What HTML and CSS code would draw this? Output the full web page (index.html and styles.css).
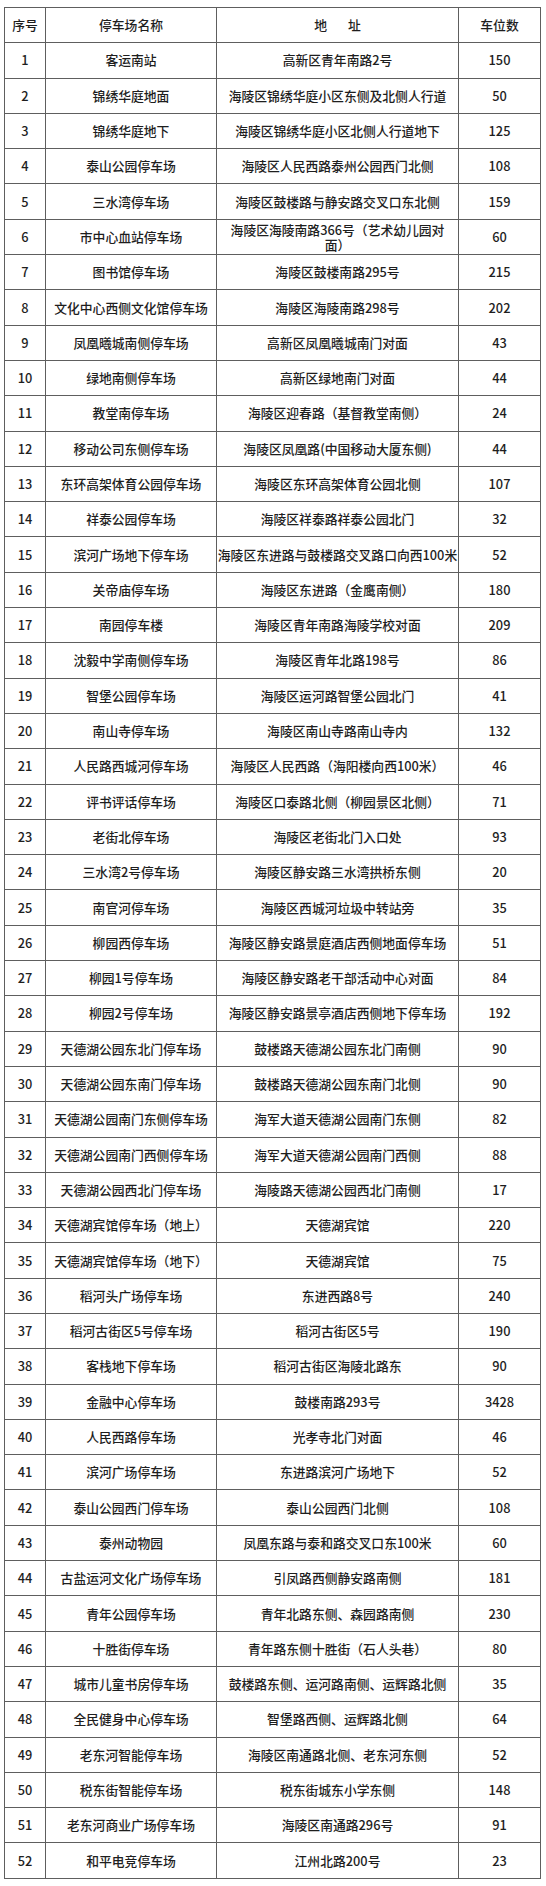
FILE: index.html
```html
<!DOCTYPE html>
<html lang="zh-CN">
<head>
<meta charset="utf-8">
<title>停车场列表</title>
<link rel="stylesheet" href="styles.css">
</head>
<body>
<table class="lots">
<colgroup>
<col class="c-no"><col class="c-name"><col class="c-addr"><col class="c-cnt">
</colgroup>
<thead>
<tr><th>序号</th><th>停车场名称</th><th>地<span class="gap"></span>址</th><th>车位数</th></tr>
</thead>
<tbody>
<tr><td>1</td><td>客运南站</td><td>高新区青年南路2号</td><td>150</td></tr>
<tr><td>2</td><td>锦绣华庭地面</td><td>海陵区锦绣华庭小区东侧及北侧人行道</td><td>50</td></tr>
<tr><td>3</td><td>锦绣华庭地下</td><td>海陵区锦绣华庭小区北侧人行道地下</td><td>125</td></tr>
<tr><td>4</td><td>泰山公园停车场</td><td>海陵区人民西路泰州公园西门北侧</td><td>108</td></tr>
<tr><td>5</td><td>三水湾停车场</td><td>海陵区鼓楼路与静安路交叉口东北侧</td><td>159</td></tr>
<tr><td>6</td><td>市中心血站停车场</td><td class="two">海陵区海陵南路366号（艺术幼儿园对<br>面）</td><td>60</td></tr>
<tr><td>7</td><td>图书馆停车场</td><td>海陵区鼓楼南路295号</td><td>215</td></tr>
<tr><td>8</td><td>文化中心西侧文化馆停车场</td><td>海陵区海陵南路298号</td><td>202</td></tr>
<tr><td>9</td><td>凤凰曦城南侧停车场</td><td>高新区凤凰曦城南门对面</td><td>43</td></tr>
<tr><td>10</td><td>绿地南侧停车场</td><td>高新区绿地南门对面</td><td>44</td></tr>
<tr><td>11</td><td>教堂南停车场</td><td>海陵区迎春路（基督教堂南侧）</td><td>24</td></tr>
<tr><td>12</td><td>移动公司东侧停车场</td><td>海陵区凤凰路(中国移动大厦东侧)</td><td>44</td></tr>
<tr><td>13</td><td>东环高架体育公园停车场</td><td>海陵区东环高架体育公园北侧</td><td>107</td></tr>
<tr><td>14</td><td>祥泰公园停车场</td><td>海陵区祥泰路祥泰公园北门</td><td>32</td></tr>
<tr><td>15</td><td>滨河广场地下停车场</td><td>海陵区东进路与鼓楼路交叉路口向西100米</td><td>52</td></tr>
<tr><td>16</td><td>关帝庙停车场</td><td>海陵区东进路（金鹰南侧）</td><td>180</td></tr>
<tr><td>17</td><td>南园停车楼</td><td>海陵区青年南路海陵学校对面</td><td>209</td></tr>
<tr><td>18</td><td>沈毅中学南侧停车场</td><td>海陵区青年北路198号</td><td>86</td></tr>
<tr><td>19</td><td>智堡公园停车场</td><td>海陵区运河路智堡公园北门</td><td>41</td></tr>
<tr><td>20</td><td>南山寺停车场</td><td>海陵区南山寺路南山寺内</td><td>132</td></tr>
<tr><td>21</td><td>人民路西城河停车场</td><td>海陵区人民西路（海阳楼向西100米）</td><td>46</td></tr>
<tr><td>22</td><td>评书评话停车场</td><td>海陵区口泰路北侧（柳园景区北侧）</td><td>71</td></tr>
<tr><td>23</td><td>老街北停车场</td><td>海陵区老街北门入口处</td><td>93</td></tr>
<tr><td>24</td><td>三水湾2号停车场</td><td>海陵区静安路三水湾拱桥东侧</td><td>20</td></tr>
<tr><td>25</td><td>南官河停车场</td><td>海陵区西城河垃圾中转站旁</td><td>35</td></tr>
<tr><td>26</td><td>柳园西停车场</td><td>海陵区静安路景庭酒店西侧地面停车场</td><td>51</td></tr>
<tr><td>27</td><td>柳园1号停车场</td><td>海陵区静安路老干部活动中心对面</td><td>84</td></tr>
<tr><td>28</td><td>柳园2号停车场</td><td>海陵区静安路景亭酒店西侧地下停车场</td><td>192</td></tr>
<tr><td>29</td><td>天德湖公园东北门停车场</td><td>鼓楼路天德湖公园东北门南侧</td><td>90</td></tr>
<tr><td>30</td><td>天德湖公园东南门停车场</td><td>鼓楼路天德湖公园东南门北侧</td><td>90</td></tr>
<tr><td>31</td><td>天德湖公园南门东侧停车场</td><td>海军大道天德湖公园南门东侧</td><td>82</td></tr>
<tr><td>32</td><td>天德湖公园南门西侧停车场</td><td>海军大道天德湖公园南门西侧</td><td>88</td></tr>
<tr><td>33</td><td>天德湖公园西北门停车场</td><td>海陵路天德湖公园西北门南侧</td><td>17</td></tr>
<tr><td>34</td><td>天德湖宾馆停车场（地上）</td><td>天德湖宾馆</td><td>220</td></tr>
<tr><td>35</td><td>天德湖宾馆停车场（地下）</td><td>天德湖宾馆</td><td>75</td></tr>
<tr><td>36</td><td>稻河头广场停车场</td><td>东进西路8号</td><td>240</td></tr>
<tr><td>37</td><td>稻河古街区5号停车场</td><td>稻河古街区5号</td><td>190</td></tr>
<tr><td>38</td><td>客栈地下停车场</td><td>稻河古街区海陵北路东</td><td>90</td></tr>
<tr><td>39</td><td>金融中心停车场</td><td>鼓楼南路293号</td><td>3428</td></tr>
<tr><td>40</td><td>人民西路停车场</td><td>光孝寺北门对面</td><td>46</td></tr>
<tr><td>41</td><td>滨河广场停车场</td><td>东进路滨河广场地下</td><td>52</td></tr>
<tr><td>42</td><td>泰山公园西门停车场</td><td>泰山公园西门北侧</td><td>108</td></tr>
<tr><td>43</td><td>泰州动物园</td><td>凤凰东路与泰和路交叉口东100米</td><td>60</td></tr>
<tr><td>44</td><td>古盐运河文化广场停车场</td><td>引凤路西侧静安路南侧</td><td>181</td></tr>
<tr><td>45</td><td>青年公园停车场</td><td>青年北路东侧、森园路南侧</td><td>230</td></tr>
<tr><td>46</td><td>十胜街停车场</td><td>青年路东侧十胜街（石人头巷）</td><td>80</td></tr>
<tr><td>47</td><td>城市儿童书房停车场</td><td>鼓楼路东侧、运河路南侧、运辉路北侧</td><td>35</td></tr>
<tr><td>48</td><td>全民健身中心停车场</td><td>智堡路西侧、运辉路北侧</td><td>64</td></tr>
<tr><td>49</td><td>老东河智能停车场</td><td>海陵区南通路北侧、老东河东侧</td><td>52</td></tr>
<tr><td>50</td><td>税东街智能停车场</td><td>税东街城东小学东侧</td><td>148</td></tr>
<tr><td>51</td><td>老东河商业广场停车场</td><td>海陵区南通路296号</td><td>91</td></tr>
<tr><td>52</td><td>和平电竞停车场</td><td>江州北路200号</td><td>23</td></tr>
</tbody>
</table>
</body>
</html>
```
FILE: styles.css
```css
html, body {
  margin: 0;
  padding: 0;
  background: #ffffff;
}

body {
  font-family: "Noto Sans CJK SC", "Noto Sans", sans-serif;
  font-size: 12.8px;
  font-weight: 500;
  color: #1e1e1e;
}

.lots {
  margin: 7px 0 0 4px;
  width: 536px;
  border-collapse: collapse;
  table-layout: fixed;
}

.c-no { width: 41px; }
.c-name { width: 171px; }
.c-addr { width: 242px; }
.c-cnt { width: 82px; }

.lots th,
.lots td {
  height: 34.3px;
  padding: 0;
  border: 1px solid #5e5e5e;
  text-align: center;
  vertical-align: middle;
  font-weight: 500;
  line-height: 16px;
  white-space: nowrap;
  overflow: hidden;
}

.lots td.two {
  line-height: 15px;
  white-space: normal;
}

.gap {
  display: inline-block;
  width: 21px;
}
```
